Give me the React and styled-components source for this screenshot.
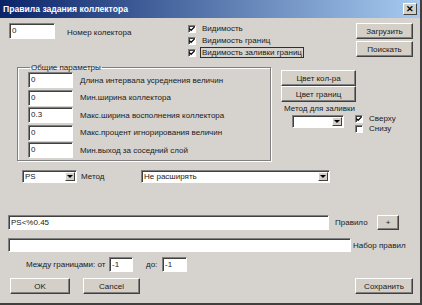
import React from "react";
import styled, { createGlobalStyle } from "styled-components";

const Global = createGlobalStyle`
  html, body {
    margin: 0;
    padding: 0;
    background: #d4d0c8;
  }
  * {
    box-sizing: border-box;
  }
`;

const Window = styled.div`
  width: 422px;
  height: 305px;
  background: #d6d3ce;
  border-right: 2px solid #404040;
  border-bottom: 2px solid #404040;
  font-family: "Liberation Sans", Arial, sans-serif;
  font-size: 8px;
  color: #1a1a1a;
  overflow: hidden;
`;

const TitleBar = styled.div`
  height: 18px;
  display: flex;
  align-items: center;
  justify-content: space-between;
  padding: 0 3px 0 3px;
  background: linear-gradient(to right, #0a246a, #a6caf0);
  color: #fff;
  font-weight: bold;
  font-size: 8.6px;
`;

const CloseBtn = styled.div`
  width: 14px;
  height: 12px;
  background: #d4d0c8;
  border: 1px solid;
  border-color: #fff #404040 #404040 #fff;
  display: flex;
  align-items: center;
  justify-content: center;
  color: #000;
  font-size: 9px;
  font-weight: bold;
  line-height: 1;
`;

const Row = styled.div`
  display: flex;
  align-items: ${(p) => p.$align || "center"};
  margin-top: ${(p) => p.$top || 0}px;
  padding-left: ${(p) => p.$left || 0}px;
  height: ${(p) => (p.$h ? `${p.$h}px` : "auto")};
`;

const Field = styled.div`
  width: ${(p) => p.$w}px;
  height: ${(p) => p.$h || 16}px;
  margin-left: ${(p) => p.$ml || 0}px;
  background: #fff;
  border: 1px solid;
  border-color: #808080 #fff #fff #808080;
  box-shadow: inset 1px 1px 0 #404040;
  padding: 1px 0 0 2px;
  font-size: 8px;
  line-height: 12px;
  flex-shrink: 0;
  white-space: nowrap;
  overflow: hidden;
`;

const Label = styled.span`
  margin-left: ${(p) => p.$ml || 0}px;
  width: ${(p) => (p.$w ? `${p.$w}px` : "auto")};
  white-space: nowrap;
  flex-shrink: 0;
`;

const Button = styled.div`
  width: ${(p) => p.$w}px;
  height: ${(p) => p.$h || 16}px;
  margin-left: ${(p) => p.$ml || 0}px;
  background: #d4d0c8;
  border: 1px solid;
  border-color: #fff #404040 #404040 #fff;
  box-shadow: inset -1px -1px 0 #808080;
  display: flex;
  align-items: center;
  justify-content: center;
  font-size: 8px;
  flex-shrink: 0;
`;

const Combo = styled(Field)`
  display: flex;
  align-items: stretch;
  justify-content: space-between;
  padding: 1px 1px 1px 2px;
  height: ${(p) => p.$h || 13}px;
  line-height: 10px;
`;

const Arrow = styled.div`
  width: 10px;
  background: #d4d0c8;
  border: 1px solid;
  border-color: #fff #404040 #404040 #fff;
  display: flex;
  align-items: center;
  justify-content: center;
  &::after {
    content: "";
    border-left: 3px solid transparent;
    border-right: 3px solid transparent;
    border-top: 3px solid #000;
  }
`;

const CheckList = styled.div`
  display: flex;
  flex-direction: column;
  gap: ${(p) => p.$gap || 3}px;
  margin-left: ${(p) => p.$ml || 0}px;
  margin-top: ${(p) => p.$mt || 0}px;
  width: ${(p) => (p.$w ? `${p.$w}px` : "auto")};
  flex-shrink: 0;
`;

const CheckRow = styled.div`
  display: flex;
  align-items: center;
  height: ${(p) => p.$h || 9}px;
  white-space: nowrap;
`;

const Box = styled.span`
  width: 8px;
  height: 8px;
  background: #fff;
  border: 1px solid;
  border-color: #808080 #fff #fff #808080;
  box-shadow: inset 1px 1px 0 #404040;
  margin-right: 4px;
  display: inline-flex;
  align-items: center;
  justify-content: center;
  flex-shrink: 0;
`;

const CheckText = styled.span`
  padding: 0 1px;
  border: 1px solid ${(p) => (p.$focus ? "#303030" : "transparent")};
  line-height: 9px;
`;

const Group = styled.fieldset`
  margin: 0;
  margin-left: 17px;
  width: 254px;
  height: 98px;
  border: 1px solid #808080;
  box-shadow: 1px 1px 0 #fff, inset 1px 1px 0 #fff;
  padding: 0 0 0 10px;
  display: flex;
  flex-direction: column;
  gap: 1px;
  flex-shrink: 0;
  legend {
    padding: 0 1px;
    margin-left: 2px;
    font-size: 8px;
  }
`;

const ParamRow = styled.div`
  display: flex;
  align-items: center;
  height: 16.5px;
`;

const Column = styled.div`
  display: flex;
  flex-direction: column;
  margin-left: ${(p) => p.$ml || 0}px;
  margin-top: ${(p) => p.$mt || 0}px;
  gap: ${(p) => p.$gap || 0}px;
  flex-shrink: 0;
`;

const Tick = () => (
  <svg width="6" height="6" viewBox="0 0 7 7">
    <path d="M0.5 3 L2.5 5 L6.5 1" stroke="#000" strokeWidth="1.4" fill="none" />
  </svg>
);

const Check = ({ checked, focus, children, h }) => (
  <CheckRow $h={h}>
    <Box>{checked && <Tick />}</Box>
    <CheckText $focus={focus}>{children}</CheckText>
  </CheckRow>
);

const params = [
  ["0", "Длина интервала усреднения величин"],
  ["0", "Мин.ширина коллектора"],
  ["0.3", "Макс.ширина восполнения коллектора"],
  ["0", "Макс.процент игнорирования величин"],
  ["0", "Мин.выход за соседний слой"],
];

export default function App() {
  return (
    <Window>
      <Global />
      <TitleBar>
        <span>Правила задания коллектора</span>
        <CloseBtn>✕</CloseBtn>
      </TitleBar>

      <Row $top={5} $align="flex-start" $h={36}>
        <Field $w={46} $ml={9}>0</Field>
        <Label $ml={12} $w={121} style={{ marginTop: 5 }}>Номер колектора</Label>
        <CheckList $w={168} $mt={1} $gap={3}>
          <Check checked>Видимость</Check>
          <Check checked>Видимость границ</Check>
          <Check checked focus>Видимость заливки границ</Check>
        </CheckList>
        <Column $gap={2}>
          <Button $w={57}>Загрузить</Button>
          <Button $w={57}>Поискать</Button>
        </Column>
      </Row>

      <Row $top={4} $align="flex-start">
        <Group>
          <legend>Общие параметры</legend>
          {params.map(([v, t]) => (
            <ParamRow key={t}>
              <Field $w={45} $h={16}>{v}</Field>
              <Label $ml={7}>{t}</Label>
            </ParamRow>
          ))}
        </Group>
        <Column $ml={10} $mt={7}>
          <Button $w={75} $h={16}>Цвет кол-ра</Button>
          <Button $w={75} $h={16}>Цвет границ</Button>
          <Label $ml={3} style={{ marginTop: 2 }}>Метод для заливки</Label>
          <Row $align="flex-start">
            <Combo $w={52} $ml={11} $h={13} style={{ marginTop: 2 }}>
              <span />
              <Arrow />
            </Combo>
            <CheckList $ml={11} $mt={1} $gap={1}>
              <Check checked>Сверху</Check>
              <Check>Снизу</Check>
            </CheckList>
          </Row>
        </Column>
      </Row>

      <Row $top={9} $left={22}>
        <Combo $w={55}>
          <span>PS</span>
          <Arrow />
        </Combo>
        <Label $ml={4} $w={60}>Метод</Label>
        <Combo $w={189}>
          <span>Не расширять</span>
          <Arrow />
        </Combo>
      </Row>

      <Row $top={32} $left={8}>
        <Field $w={321} $h={15}>PS&lt;%0.45</Field>
        <Label $ml={6} $w={42}>Правило</Label>
        <Button $w={22} $h={15}>+</Button>
      </Row>

      <Row $top={8} $left={8}>
        <Field $w={343} $h={14} />
        <Label $ml={2}>Набор правил</Label>
      </Row>

      <Row $top={5} $left={26}>
        <Label $w={83}>Между границами: от</Label>
        <Field $w={24} $h={15}>-1</Field>
        <Label $ml={13} $w={16}>до:</Label>
        <Field $w={25} $h={15}>-1</Field>
      </Row>

      <Row $top={6} $left={10}>
        <Button $w={60}>OK</Button>
        <Button $w={57} $ml={13}>Cancel</Button>
        <Button $w={58} $ml={215}>Сохранить</Button>
      </Row>
    </Window>
  );
}
